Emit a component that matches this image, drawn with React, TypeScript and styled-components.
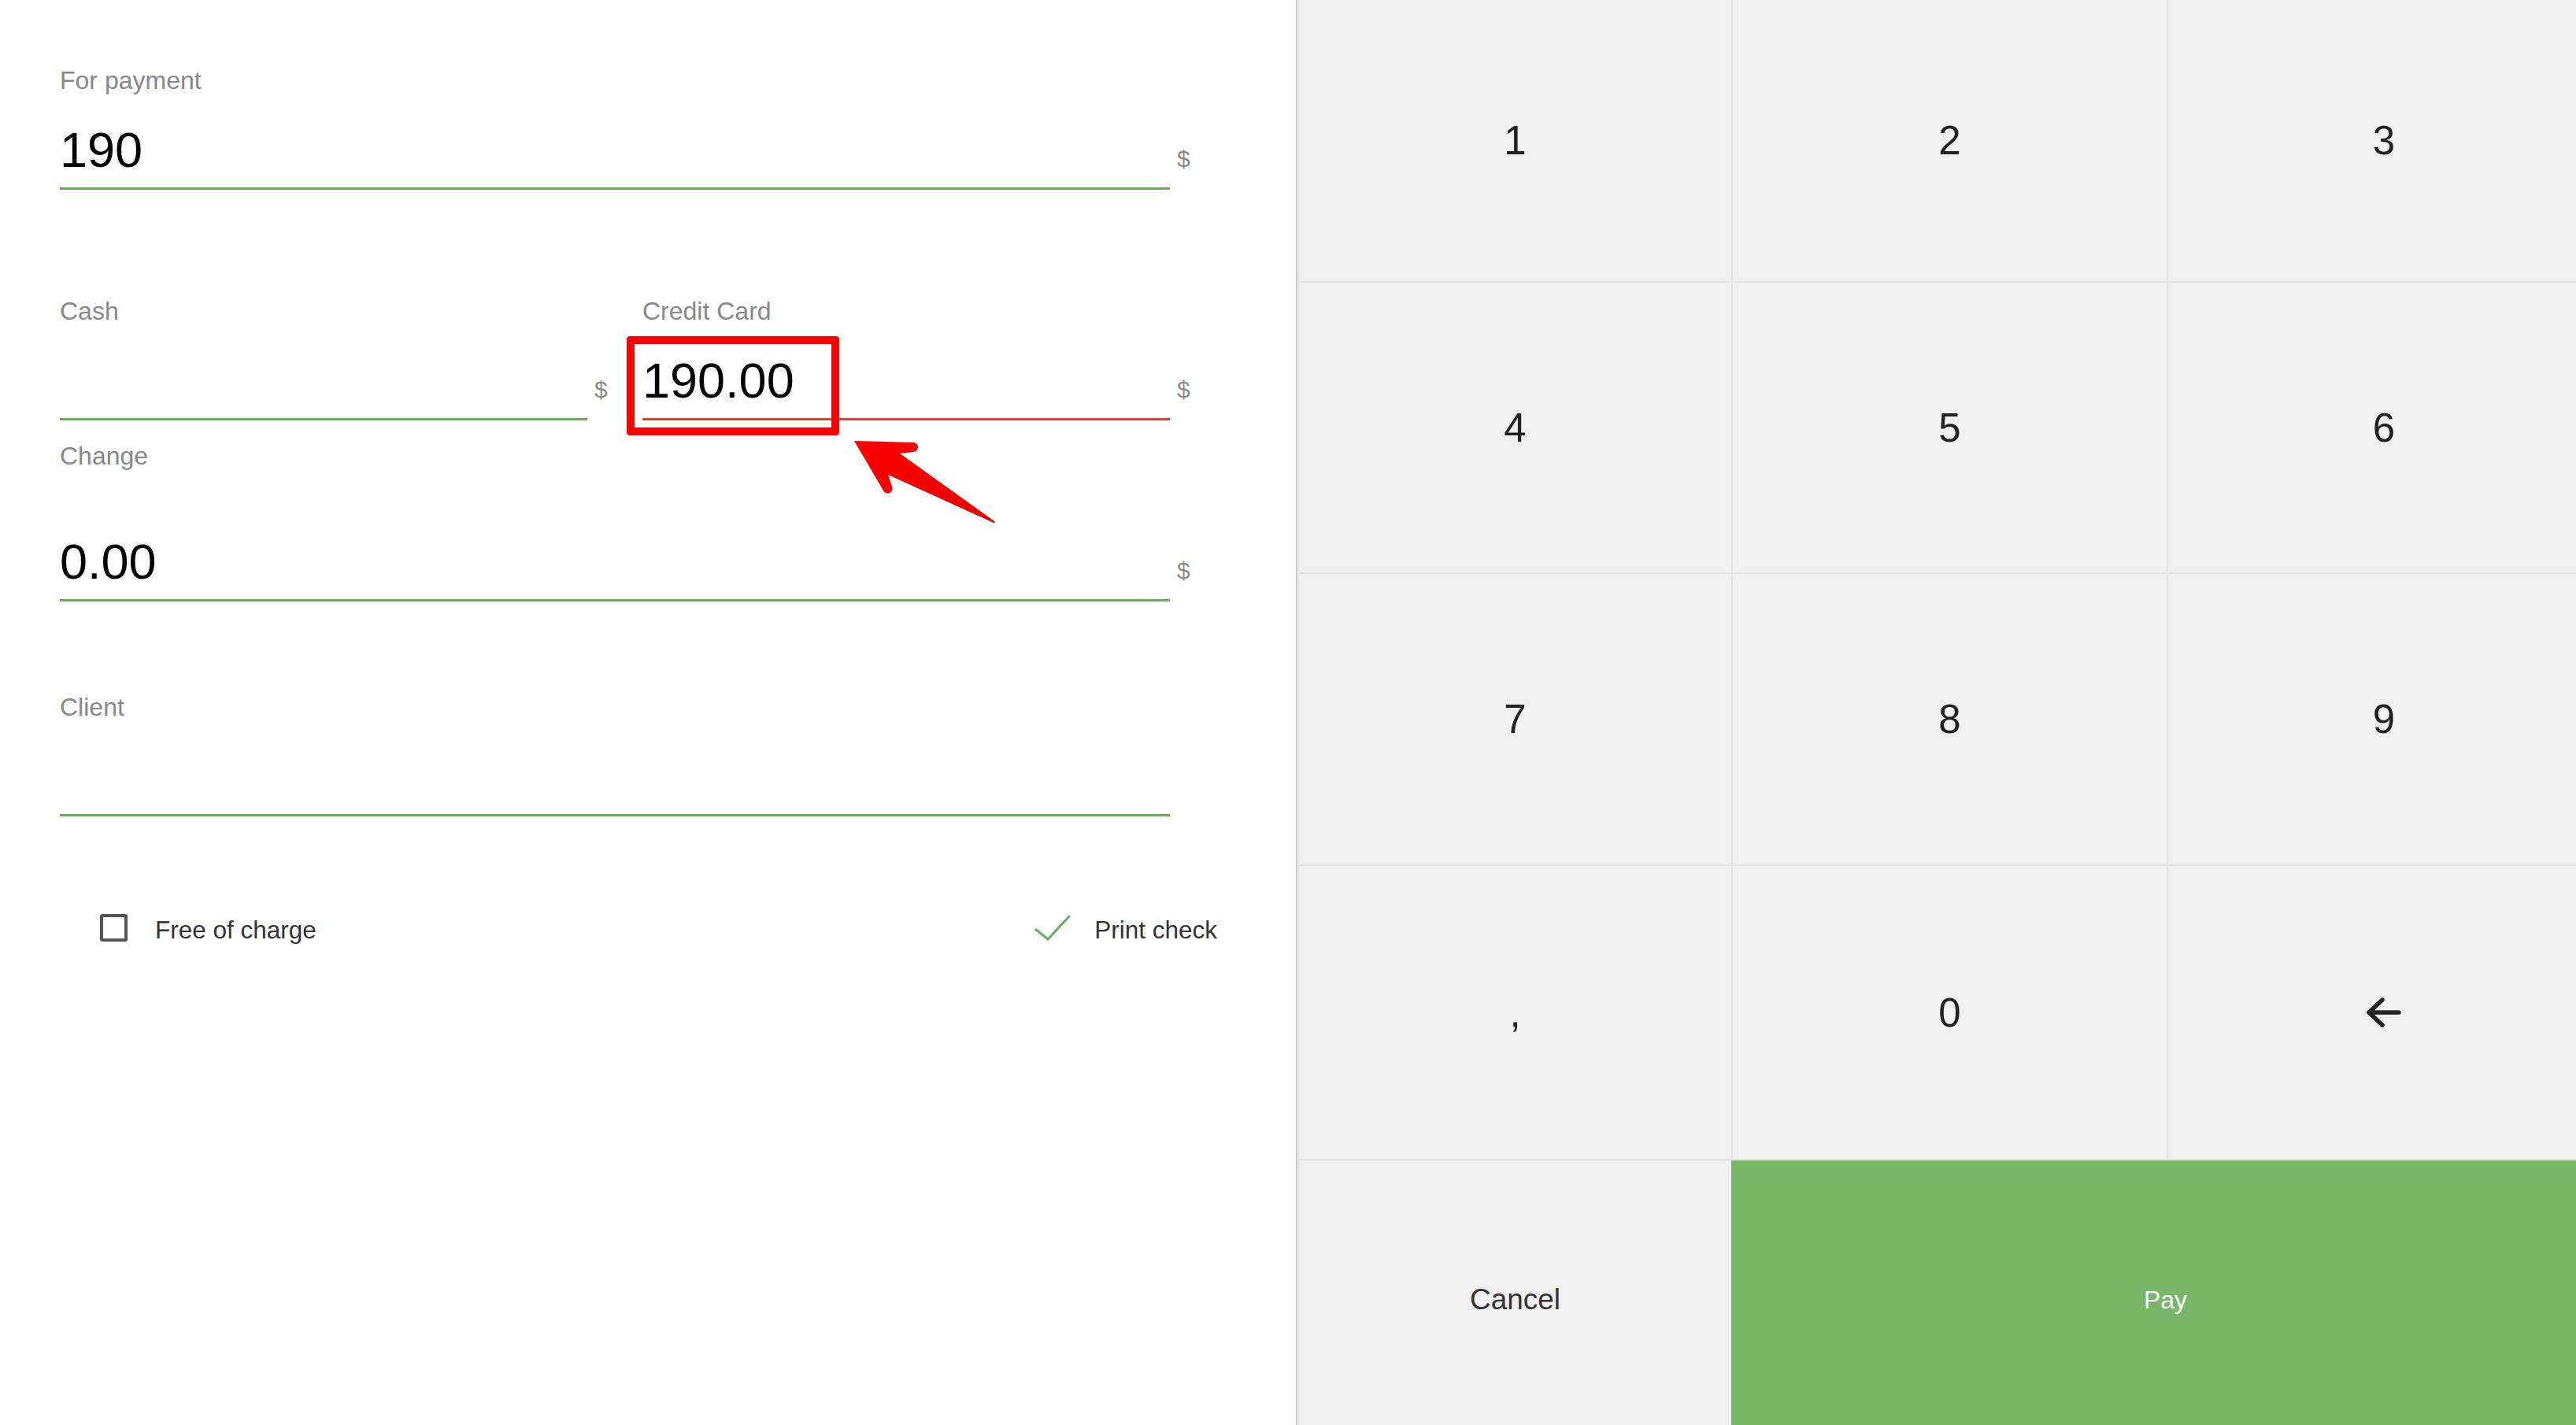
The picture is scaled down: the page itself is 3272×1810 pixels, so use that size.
import React from "react"
import styled, { createGlobalStyle } from "styled-components"

const GlobalStyle = createGlobalStyle`
  html, body {
    margin: 0;
    padding: 0;
    background: #ffffff;
  }

  body {
    font-family: "Liberation Sans", Arial, Helvetica, sans-serif;
  }
`

type FieldProps = {
  label: string
  value?: string
  suffix?: string
  labelGap?: number
  invalid?: boolean
}

const Field: React.FC<FieldProps> = ({ label, value, suffix, labelGap = 32, invalid }) => {
  return (
    <FieldBox>
      <Label $gap={labelGap}>{label}</Label>
      <InputRow>
        <Input $invalid={invalid}>{value || "\u00a0"}</Input>
        <Suffix>{suffix}</Suffix>
      </InputRow>
    </FieldBox>
  )
}

const keys = ["1", "2", "3", "4", "5", "6", "7", "8", "9", ",", "0"]

const App: React.FC = () => {
  return (
    <>
      <GlobalStyle />
      <Screen>
        <FormPanel>
          <Field label="For payment" value="190" suffix="$" />

          <SplitRow>
            <Field label="Cash" suffix="$" />
            <Field label="Credit Card" value="190.00" suffix="$" invalid />
          </SplitRow>

          <Section $top={27}>
            <Field label="Change" value="0.00" suffix="$" labelGap={78} />
          </Section>

          <Section $top={116}>
            <Field label="Client" />
          </Section>

          <OptionsRow>
            <Option>
              <CheckBox />
              <OptionText>Free of charge</OptionText>
            </Option>
            <Option>
              <svg width="48" height="34" viewBox="0 0 48 34">
                <path d="M2 19 L18 32 L46 2" fill="none" stroke="#62b35a" strokeWidth="3" />
              </svg>
              <OptionText>Print check</OptionText>
            </Option>
          </OptionsRow>

          {/* annotation drawn over the credit card field */}
          <Highlight />
          <Pointer width="190" height="115" viewBox="0 0 190 115">
            <defs>
              <linearGradient id="arrowFill" x1="0" y1="0" x2="1" y2="1">
                <stop offset="0" stopColor="#ff0000" />
                <stop offset="1" stopColor="#e60000" />
              </linearGradient>
            </defs>
            <path
              d="M5 5 L80 7 A6 6 0 0 1 80 19 L63 21 L183 107 Q185 110 182 109 L48 48 L53 63 A6 6 0 0 1 42 68 Z"
              fill="url(#arrowFill)"
            />
          </Pointer>
        </FormPanel>

        <Keypad>
          {keys.map((k) => (
            <Key key={k}>{k}</Key>
          ))}
          <Key aria-label="backspace">
            <svg width="44" height="38" viewBox="0 0 44 38">
              <path
                d="M3 19 H41 M20 3 L3 19 L20 35"
                fill="none"
                stroke="#222"
                strokeWidth="5.5"
                strokeLinecap="round"
                strokeLinejoin="round"
              />
            </svg>
          </Key>
          <CancelKey>Cancel</CancelKey>
          <PayKey>Pay</PayKey>
        </Keypad>
      </Screen>
    </>
  )
}

export default App


const Screen = styled.div`
  display: flex;
  flex-direction: row;
  height: 100vh;
  overflow: hidden;
  background: #ffffff;
`

const FormPanel = styled.div`
  position: relative;
  flex: 0 0 1646px;
  box-sizing: border-box;
  padding: 84px 0 0 76px;
`

const FieldBox = styled.div`
  display: flex;
  flex-direction: column;
  width: 1436px;
  max-width: 100%;
`

const Label = styled.div<{ $gap: number }>`
  font-size: 32px;
  line-height: 36px;
  color: #888888;
  margin-bottom: ${(p) => p.$gap}px;
`

const InputRow = styled.div`
  display: flex;
  flex-direction: row;
  align-items: flex-end;
`

const Input = styled.div<{ $invalid?: boolean }>`
  flex: 1;
  font-size: 63px;
  line-height: 76px;
  color: #000000;
  padding-bottom: 10px;
  border-bottom: 3px solid ${(p) => (p.$invalid ? "#ea3a2c" : "#69ad5c")};
  white-space: nowrap;
`

const Suffix = styled.div`
  flex: 0 0 17px;
  margin-left: 9px;
  font-size: 30px;
  line-height: 30px;
  color: #888888;
  padding-bottom: 24px;
`

const SplitRow = styled.div`
  display: grid;
  grid-template-columns: 696px 696px;
  column-gap: 44px;
  margin-top: 136px;
`

const Section = styled.div<{ $top: number }>`
  margin-top: ${(p) => p.$top}px;
`

const OptionsRow = styled.div`
  display: flex;
  flex-direction: row;
  justify-content: space-between;
  align-items: center;
  width: 1470px;
  box-sizing: border-box;
  height: 36px;
  margin-top: 123px;
  padding-left: 51px;
`

const Option = styled.div`
  display: flex;
  flex-direction: row;
  align-items: center;
  gap: 29px;
`

const CheckBox = styled.div`
  width: 35px;
  height: 35px;
  box-sizing: border-box;
  border: 4px solid #555555;
  border-radius: 3px;
  margin-right: 6px;
`

const OptionText = styled.span`
  font-size: 31.5px;
  line-height: 36px;
  padding-top: 6px;
  color: #333333;
`

const Highlight = styled.div`
  position: absolute;
  left: 796px;
  top: 427px;
  width: 270px;
  height: 126px;
  box-sizing: border-box;
  border: 10px solid #ff0000;
  border-radius: 4px;
`

const Pointer = styled.svg`
  position: absolute;
  left: 1080px;
  top: 555px;
`

const Keypad = styled.div`
  flex: 0 0 auto;
  display: grid;
  grid-template-columns: 549px 551px 548px;
  grid-template-rows: 357px 368px 369px 372px 354px;
  gap: 2px;
  padding-left: 2px;
  background: #e2e2e2;
  border-left: 2px solid #d4d4d4;
`

const Key = styled.button`
  display: flex;
  align-items: center;
  justify-content: center;
  border: none;
  margin: 0;
  padding: 0;
  background: #f0f0f0;
  font-family: "Liberation Sans", Arial, Helvetica, sans-serif;
  font-size: 51px;
  color: #222222;
  cursor: pointer;
`

const CancelKey = styled(Key)`
  font-size: 37px;
  color: #333333;
`

const PayKey = styled(Key)`
  grid-column: span 2;
  margin-left: -2px;
  background: #77b767;
  color: #ffffff;
  font-size: 32px;
`
